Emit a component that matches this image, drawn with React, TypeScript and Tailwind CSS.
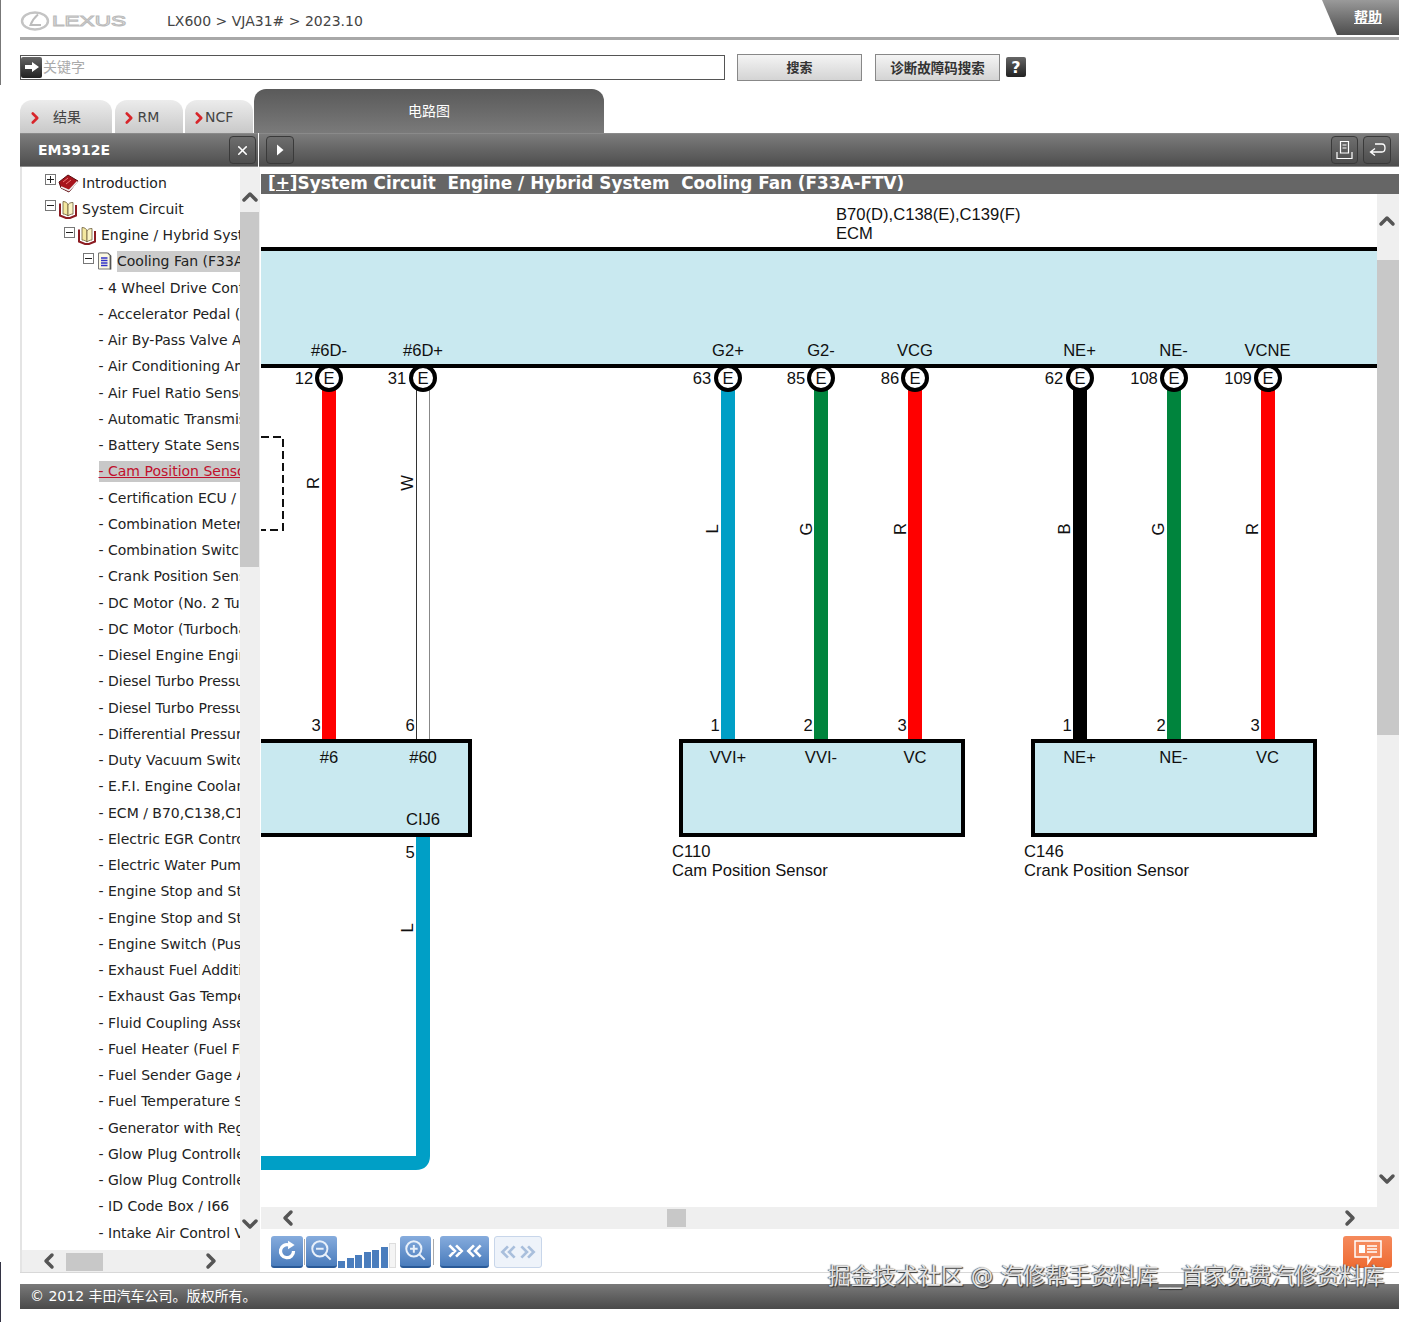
import React from 'react'
import { ChevronDown, ChevronLeft, ChevronRight, ChevronUp, X } from 'lucide-react'

const leaves = [
  '4 Wheel Drive Control',
  'Accelerator Pedal (Sensor)',
  'Air By-Pass Valve Assembly',
  'Air Conditioning Amplifier',
  'Air Fuel Ratio Sensor',
  'Automatic Transmission',
  'Battery State Sensor',
  'Cam Position Sensor',
  'Certification ECU / E29',
  'Combination Meter',
  'Combination Switch',
  'Crank Position Sensor',
  'DC Motor (No. 2 Turbo)',
  'DC Motor (Turbocharger)',
  'Diesel Engine Engine',
  'Diesel Turbo Pressure',
  'Diesel Turbo Pressure',
  'Differential Pressure',
  'Duty Vacuum Switching',
  'E.F.I. Engine Coolant',
  'ECM / B70,C138,C139',
  'Electric EGR Control',
  'Electric Water Pump',
  'Engine Stop and Start',
  'Engine Stop and Start',
  'Engine Switch (Push)',
  'Exhaust Fuel Addition',
  'Exhaust Gas Temperature',
  'Fluid Coupling Assembly',
  'Fuel Heater (Fuel Filter)',
  'Fuel Sender Gage Assembly',
  'Fuel Temperature Sensor',
  'Generator with Regulator',
  'Glow Plug Controller',
  'Glow Plug Controller',
  'ID Code Box / I66',
  'Intake Air Control Valve',
]

const pins = [
  { x: 329, top: '#6D-', num: '12', numX: 304, color: '#ff0000', wire: 'R', wireX: 319, wireY: 483, bottom: '3' },
  { x: 423, top: '#6D+', num: '31', numX: 397, color: '#ffffff', wire: 'W', wireX: 413, wireY: 483, bottom: '6' },
  { x: 728, top: 'G2+', num: '63', numX: 702, color: '#009fc6', wire: 'L', wireX: 718, wireY: 529, bottom: '1' },
  { x: 821, top: 'G2-', num: '85', numX: 796, color: '#00843d', wire: 'G', wireX: 812, wireY: 529, bottom: '2' },
  { x: 915, top: 'VCG', num: '86', numX: 890, color: '#ff0000', wire: 'R', wireX: 906, wireY: 529, bottom: '3' },
  { x: 1080, top: 'NE+', num: '62', numX: 1054, color: '#000000', wire: 'B', wireX: 1070, wireY: 529, bottom: '1' },
  { x: 1174, top: 'NE-', num: '108', numX: 1144, color: '#00843d', wire: 'G', wireX: 1164, wireY: 529, bottom: '2' },
  { x: 1268, top: 'VCNE', num: '109', numX: 1238, color: '#ff0000', wire: 'R', wireX: 1258, wireY: 529, bottom: '3' },
]

const boxLabels = [
  { x: 329, t: '#6' },
  { x: 423, t: '#60' },
  { x: 728, t: 'VVI+' },
  { x: 821, t: 'VVI-' },
  { x: 915, t: 'VC' },
  { x: 1079.5, t: 'NE+' },
  { x: 1173.5, t: 'NE-' },
  { x: 1267.5, t: 'VC' },
]

function Diagram() {
  return (
    <svg viewBox="261 194 1116 1013" className="block h-[1013px] w-[1116px] shrink-0 [font-family:'Liberation_Sans',sans-serif]" fontSize="16.6" fill="#111">
      <text x="836" y="220">B70(D),C138(E),C139(F)</text>
      <text x="836" y="239">ECM</text>
      <rect x="261" y="250" width="1116" height="115" fill="#c9e9f0" />
      <rect x="261" y="247" width="1116" height="4" fill="#000" />
      <rect x="261" y="364" width="1116" height="4" fill="#000" />

      <path d="M261 437H283V530H261" fill="none" stroke="#111" strokeWidth="2" strokeDasharray="8 4" />

      {/* L wire going out of CIJ6 */}
      <path d="M423 835V1156Q423 1163 416 1163H261" fill="none" stroke="#009fc6" strokeWidth="14" />

      {pins.map((p) => (
        <g key={p.x}>
          {p.color === '#ffffff' ? (
            <g>
              <line x1={p.x - 6.5} x2={p.x - 6.5} y1="390" y2="741" stroke="#333" strokeWidth="1" />
              <line x1={p.x + 6.5} x2={p.x + 6.5} y1="390" y2="741" stroke="#888" strokeWidth="1" />
            </g>
          ) : (
            <rect x={p.x - 7} y="390" width="14" height="351" fill={p.color} />
          )}
          <text x={p.x >= 1080 ? p.x - 0.5 : p.x} y="356" textAnchor="middle">{p.top}</text>
          <text x={p.numX} y="384" textAnchor="middle">{p.num}</text>
          <circle cx={p.x} cy="378" r="12" fill="#fff" stroke="#000" strokeWidth="4" />
          <text x={p.x} y="384" textAnchor="middle">E</text>
          <text x={p.x - 13} y="731" textAnchor="middle">{p.bottom}</text>
          <text transform={`translate(${p.wireX} ${p.wireY}) rotate(-90)`} textAnchor="middle">{p.wire}</text>
        </g>
      ))}

      <path d="M261 741H470V835H261" fill="#c9e9f0" stroke="#000" strokeWidth="4" />
      <rect x="681" y="741" width="282" height="94" fill="#c9e9f0" stroke="#000" strokeWidth="4" />
      <rect x="1033" y="741" width="282" height="94" fill="#c9e9f0" stroke="#000" strokeWidth="4" />

      {boxLabels.map((b) => (
        <text key={b.x} x={b.x} y="763" textAnchor="middle">{b.t}</text>
      ))}
      <text x="423" y="825" textAnchor="middle">CIJ6</text>
      <text x="410" y="858" textAnchor="middle">5</text>
      <text transform="translate(413 928) rotate(-90)" textAnchor="middle">L</text>

      <text x="672" y="857">C110</text>
      <text x="672" y="876">Cam Position Sensor</text>
      <text x="1024" y="857">C146</text>
      <text x="1024" y="876">Crank Position Sensor</text>
    </svg>
  )
}

function LexusLogo() {
  return (
    <svg width="108" height="22" viewBox="0 0 108 22">
      <ellipse cx="15" cy="11" rx="13" ry="8.5" fill="none" stroke="#c4c4c4" strokeWidth="2.4" />
      <path d="M18 4.5C15 7 12 11 10.5 15H21" fill="none" stroke="#bcbcbc" strokeWidth="2" />
      <text x="32" y="16" fontSize="15" textLength="74" lengthAdjust="spacingAndGlyphs" fill="#ffffff" stroke="#bcbcbc" strokeWidth="1" className="[font-family:'Liberation_Sans',sans-serif]">LEXUS</text>
    </svg>
  )
}

function ClosedBook() {
  return (
    <svg width="21" height="19" viewBox="0 0 21 19">
      <path d="M1 8L10 1L20 7L11 18L3 14Z" fill="#a8141c" stroke="#5a0c10" />
      <path d="M3 13L11 16.5L19.5 7.5" fill="none" stroke="#eee" strokeWidth="1.6" />
      <path d="M5 8L10 4M8 10L13 6" stroke="#e77" strokeWidth="1" />
    </svg>
  )
}

function OpenBook() {
  return (
    <svg width="20" height="19" viewBox="0 0 20 19">
      <path d="M2 3.5V15.5L8 18H12L18 15.5V5" fill="none" stroke="#8c1c22" strokeWidth="2" />
      <path d="M5 1.5C8 1.5 9.5 3 10 5V16C9 15 7 14 5 14Z" fill="#f4e8a0" stroke="#6a5a3a" strokeWidth="0.8" />
      <path d="M15 2.5C12 2.5 10.5 3.5 10 5V16C11 15 13 14 15 14Z" fill="#fbf4c4" stroke="#6a5a3a" strokeWidth="0.8" />
    </svg>
  )
}

function DocIcon() {
  return (
    <svg width="16" height="19" viewBox="0 0 16 19">
      <path d="M2.5 1.5H11L13.5 4V17.5" fill="none" stroke="#333" strokeWidth="1.6" />
      <path d="M1.5 1H10.5L13 3.5V17H1.5Z" fill="#fbf8e2" stroke="#777" />
      <path d="M4 6H10.5M4 8.5H10.5M4 11H10.5M4 13.5H10.5" stroke="#3232c8" strokeWidth="1.3" />
    </svg>
  )
}

function Toggle({ open }: { open: boolean }) {
  return (
    <span className="flex h-[11px] w-[11px] shrink-0 items-center justify-center border border-[#777] bg-white">
      <svg width="9" height="9" viewBox="0 0 9 9">
        <path d={open ? 'M1 4.5H8' : 'M1 4.5H8M4.5 1V8'} stroke="#222" />
      </svg>
    </span>
  )
}

function Tree() {
  return (
    <div className="h-full overflow-hidden pt-[2.9px] text-[14px] whitespace-nowrap text-[#222]">
      <div className="flex h-[26.25px] items-center pl-[23px]">
        <div className="-mt-[7px]"><Toggle open={false} /></div>
        <div className="ml-[2px]"><ClosedBook /></div>
        <span className="ml-[3px]">Introduction</span>
      </div>
      <div className="flex h-[26.25px] items-center pl-[23px]">
        <div className="-mt-[7px]"><Toggle open /></div>
        <div className="ml-[2px]"><OpenBook /></div>
        <span className="ml-[4px]">System Circuit</span>
      </div>
      <div className="flex h-[26.25px] items-center pl-[42px]">
        <div className="-mt-[7px]"><Toggle open /></div>
        <div className="ml-[2px]"><OpenBook /></div>
        <span className="ml-[4px]">Engine / Hybrid System</span>
      </div>
      <div className="flex h-[26.25px] items-center pl-[61px]">
        <div className="-mt-[7px]"><Toggle open /></div>
        <div className="ml-[3px]"><DocIcon /></div>
        <span className="ml-[4px] bg-[#cccccc]">Cooling Fan (F33A-FTV)</span>
      </div>
      {leaves.map((name, i) => {
        const active = name === 'Cam Position Sensor'
        return (
          <div key={i} className="flex h-[26.25px] items-center pl-[76.5px]">
            <span className={active ? 'bg-[#c8c8c8] text-[#c0102c] underline' : ''}>- {name}</span>
          </div>
        )
      })}
    </div>
  )
}

function ToolBtn({ children, className }: { children: React.ReactNode; className: string }) {
  return (
    <div className={`flex h-[28px] items-center justify-center rounded-[4px] border border-[#3a3a3a] bg-linear-to-b from-[#6e6e6e] to-[#4e4e4e] text-white ${className}`}>
      {children}
    </div>
  )
}

function BlueBtn({ children, className }: { children: React.ReactNode; className: string }) {
  return (
    <div className={`flex h-[32px] items-center justify-center rounded-[3px] border-b-2 border-[#2a5a98] bg-linear-to-b from-[#86acdd] to-[#4a7cbc] ${className}`}>
      {children}
    </div>
  )
}

export default function App() {
  return (
    <div className="relative h-[1322px] w-[1416px] overflow-hidden bg-white pr-[17px] pl-[20px] [font-family:'DejaVu_Sans','Noto_Sans_CJK_SC',sans-serif]">
      {/* Top bar */}
      <div className="flex h-[40px] items-start border-b-[3px] border-[#a8a8a8]">
        <div className="mt-[10px]"><LexusLogo /></div>
        <div className="mt-[11px] ml-[39px] text-[14px] text-[#444]">LX600 &gt; VJA31# &gt; 2023.10</div>
        <div className="ml-auto flex h-[35px] w-[77px] items-center justify-end bg-linear-to-b from-[#9a9a9a] to-[#4e4e4e] pr-[17px] text-[14px] font-bold text-white underline [clip-path:polygon(0_0,100%_0,100%_100%,15px_100%)]">
          帮助
        </div>
      </div>

      {/* Search */}
      <div className="mt-[14px] flex h-[26px] items-center">
        <div className="flex h-[25px] w-[705px] items-center border border-[#555] bg-white">
          <div className="flex h-[21px] w-[21px] items-center justify-center rounded-[2px] bg-linear-to-b from-[#666] to-[#222]">
            <svg width="16" height="12" viewBox="0 0 16 12"><path d="M1 4H8V1L15 6L8 11V8H1Z" fill="#fff" /></svg>
          </div>
          <span className="ml-[1px] pt-px text-[14px] text-[#aaa]">关键字</span>
        </div>
        <div className="ml-[12px] flex h-[27px] w-[125px] items-center justify-center border border-[#888] bg-linear-to-b from-[#f4f4f4] to-[#d4d4d4] pt-[2px] text-[13px] font-bold text-[#333]">搜索</div>
        <div className="ml-[13px] flex h-[27px] w-[125px] items-center justify-center border border-[#888] bg-linear-to-b from-[#f4f4f4] to-[#d4d4d4] pt-[2px] text-[13.5px] font-bold text-[#333]">诊断故障码搜索</div>
        <div className="ml-[6px] flex h-[20px] w-[20px] items-center justify-center rounded-[2px] bg-linear-to-b from-[#666] to-[#222] pt-px text-[16px] font-bold text-white">?</div>
      </div>

      {/* Tabs */}
      <div className="mt-[8px] flex h-[45px] items-end text-[14px]">
        <div className="flex h-[33px] w-[92px] items-center rounded-t-[12px] bg-linear-to-b from-[#ececec] to-[#c9c9c9] pt-[2px] pl-[5.5px] text-[#444]">
          <ChevronRight size={18} strokeWidth={3.5} className="text-[#d8252a]" />
          <span className="ml-[9.5px]">结果</span>
        </div>
        <div className="ml-[3px] flex h-[33px] w-[68px] items-center rounded-t-[12px] bg-linear-to-b from-[#ececec] to-[#c9c9c9] pt-[2px] pl-[4.5px] text-[#444]">
          <ChevronRight size={18} strokeWidth={3.5} className="text-[#d8252a]" />
          <span>RM</span>
        </div>
        <div className="ml-[2px] flex h-[33px] w-[68px] items-center rounded-t-[12px] bg-linear-to-b from-[#ececec] to-[#c9c9c9] pt-[2px] pl-[4.5px] text-[#444]">
          <ChevronRight size={18} strokeWidth={3.5} className="text-[#d8252a]" />
          <span className="-ml-[2.5px]">NCF</span>
        </div>
        <div className="ml-[1px] flex h-[44px] w-[350px] items-center justify-center rounded-t-[12px] bg-linear-to-b from-[#5a5a5a] to-[#7a7a7a] text-white">电路图</div>
      </div>

      {/* Dark toolbars */}
      <div className="flex h-[34px]">
        <div className="flex w-[238px] items-center justify-between border-y border-[#8a8a8a] bg-linear-to-b from-[#7c7c7c] to-[#4e4e4e] pr-[2px] pl-[18px] text-[14px] font-bold text-white">
          EM3912E
          <ToolBtn className="w-[27px]"><X size={15} strokeWidth={2.5} /></ToolBtn>
        </div>
        <div className="ml-px flex flex-1 items-center border-y border-[#8a8a8a] bg-linear-to-b from-[#7c7c7c] to-[#4e4e4e] pr-[8px] pl-[7px]">
          <ToolBtn className="w-[28px]">
            <svg width="10" height="14" viewBox="0 0 10 14"><path d="M2 1.5L8.5 7L2 12.5Z" fill="#fff" /></svg>
          </ToolBtn>
          <ToolBtn className="ml-auto w-[27px]">
            <svg width="19" height="20" viewBox="0 0 19 20" fill="none" stroke="#fff" strokeWidth="1.2"><path d="M5.5 1.5H13.5V13H5.5ZM7.5 5H11.5M7.5 8H11.5M2 12V18.5H17V12" /></svg>
          </ToolBtn>
          <ToolBtn className="ml-[5px] w-[28px]">
            <svg width="19" height="16" viewBox="0 0 19 16" fill="none" stroke="#fff" strokeWidth="1.3"><path d="M7 2H14C18 2 18 10 14 10H3M7 6.5L2.5 10L7 13.5" /></svg>
          </ToolBtn>
        </div>
      </div>

      {/* Main */}
      <div className="flex h-[1106px] border-b border-[#d8d8d8]">
        {/* Left panel */}
        <div className="flex w-[240px] shrink-0 flex-col border-l-2 border-[#e4e4e4]">
          <div className="flex min-h-0 flex-1">
            <div className="min-w-0 flex-1 overflow-hidden"><Tree /></div>
            <div className="relative w-[20px] shrink-0 bg-[#efefef]">
              <ChevronUp size={24} strokeWidth={3.5} className="absolute top-[18px] -left-[2px] text-[#555]" />
              <div className="absolute top-[45px] h-[355px] w-[19px] bg-[#c8c8c8]" />
              <ChevronDown size={24} strokeWidth={3.5} className="absolute top-[1045px] -left-[2px] text-[#555]" />
            </div>
          </div>
          <div className="relative h-[22px] shrink-0 bg-[#efefef]">
            <ChevronLeft size={24} strokeWidth={3.5} className="absolute -top-px left-[15px] text-[#555]" />
            <div className="absolute top-[3px] left-[44px] h-[18px] w-[37px] bg-[#c8c8c8]" />
            <ChevronRight size={24} strokeWidth={3.5} className="absolute -top-px left-[177px] text-[#555]" />
          </div>
        </div>

        {/* Right panel */}
        <div className="ml-px flex min-w-0 flex-1 flex-col pt-[7px]">
          <div className="h-[20px] shrink-0 bg-[#666666] pl-[7px] text-[16.85px] leading-[19px] font-bold whitespace-pre text-white">
            <span className="underline">[+]</span>System Circuit  Engine / Hybrid System  Cooling Fan (F33A-FTV)
          </div>
          <div className="flex h-[1013px] shrink-0">
            <Diagram />
            <div className="relative flex-1 bg-[#efefef]">
              <ChevronUp size={24} strokeWidth={3.5} className="absolute top-[15px] left-[-2px] text-[#555]" />
              <div className="absolute top-[66px] h-[475px] w-full bg-[#c8c8c8]" />
              <ChevronDown size={24} strokeWidth={3.5} className="absolute top-[973px] left-[-2px] text-[#555]" />
            </div>
          </div>
          <div className="relative h-[22px] shrink-0 bg-[#efefef]">
            <ChevronLeft size={24} strokeWidth={3.5} className="absolute -top-px left-[15px] text-[#555]" />
            <div className="absolute top-[2px] left-[406px] h-[18px] w-[19px] bg-[#c8c8c8]" />
            <ChevronRight size={24} strokeWidth={3.5} className="absolute -top-px left-[1077px] text-[#555]" />
          </div>

          {/* Viewer controls */}
          <div className="flex flex-1 items-center pt-[3px] pl-[10px]">
            <BlueBtn className="w-[32px]">
              <svg width="24" height="24" viewBox="0 0 22 22" fill="none" stroke="#fff" strokeWidth="3"><path d="M17 11A6 6 0 1 1 13 5.5" /><path d="M12 1.5L18 5.5L12 9.5Z" fill="#fff" stroke="none" /></svg>
            </BlueBtn>
            <div className="ml-px h-[26px] w-px bg-[#aaa]" />
            <BlueBtn className="ml-[1px] w-[31px]">
              <svg width="26" height="26" viewBox="0 0 24 24" fill="none" stroke="#e8f0fa" strokeWidth="1.8"><circle cx="10" cy="10" r="7" /><path d="M6.5 10H13.5M15 15L20 20" /></svg>
            </BlueBtn>
            <div className="ml-px flex h-[32px] items-end gap-[1.5px]">
              {[7, 10, 13, 16, 18, 21, 25].map((h, i) => (
                <div key={h} style={{ height: h }} className={i === 6 ? 'w-[7px] border border-[#ddd] bg-[#f4f4f4]' : 'w-[7px] bg-[#4a7dbd]'} />
              ))}
            </div>
            <BlueBtn className="ml-[4px] w-[31px]">
              <svg width="26" height="26" viewBox="0 0 24 24" fill="none" stroke="#e8f0fa" strokeWidth="1.8"><circle cx="10" cy="10" r="7" /><path d="M6.5 10H13.5M10 6.5V13.5M15 15L20 20" /></svg>
            </BlueBtn>
            <div className="ml-[2px] h-[26px] w-px bg-[#aaa]" />
            <BlueBtn className="ml-[6px] w-[49px]">
              <svg width="38" height="18" viewBox="0 0 34 16" fill="none" stroke="#fff" strokeWidth="2.4"><path d="M3 3L8 8L3 13M9 3L14 8L9 13M31 3L26 8L31 13M25 3L20 8L25 13" /></svg>
            </BlueBtn>
            <div className="ml-[5px] flex h-[32px] w-[48px] items-center justify-center rounded-[3px] border border-[#c8d6ea] bg-[#eef3fa]">
              <svg width="38" height="18" viewBox="0 0 34 16" fill="none" stroke="#a9bfdc" strokeWidth="2.4"><path d="M8 3L3 8L8 13M14 3L9 8L14 13M20 3L25 8L20 13M26 3L31 8L26 13" /></svg>
            </div>
            <div className="mr-[7px] ml-auto flex h-[32px] w-[49px] items-center justify-center rounded-[3px] bg-linear-to-b from-[#f58a5c] to-[#ee6a30]">
              <svg width="32" height="28" viewBox="0 0 32 28" fill="none" stroke="#fff" strokeWidth="1.5"><path d="M3 3H29V19H20L16 25V19H3Z" fill="#f58a5c" /><rect x="7" y="7" width="6" height="8" fill="#fff" stroke="none" /><path d="M15 8H25M15 11H25M15 14H25" /></svg>
            </div>
          </div>
        </div>
      </div>

      {/* Footer */}
      <div className="mt-[11px] flex h-[25px] items-center bg-linear-to-b from-[#7a7a7a] to-[#4a4a4a] pl-[10px] text-[14px] text-white">
        © 2012 丰田汽车公司。版权所有。
      </div>

      {/* Watermark over the footer */}
      <div className="absolute top-[1260px] left-[828px] text-[22.6px] whitespace-nowrap text-[#e4e4e4] [text-shadow:1px_1px_1px_#333,-1px_0_1px_#555]">
        掘金技术社区 @ 汽修帮手资料库__首家免费汽修资料库
      </div>

      {/* Window edge left in the capture */}
      <div className="absolute top-0 left-0 h-[85px] w-px bg-[#777]" />
      <div className="absolute bottom-0 left-0 h-[60px] w-px bg-[#334]" />
    </div>
  )
}
